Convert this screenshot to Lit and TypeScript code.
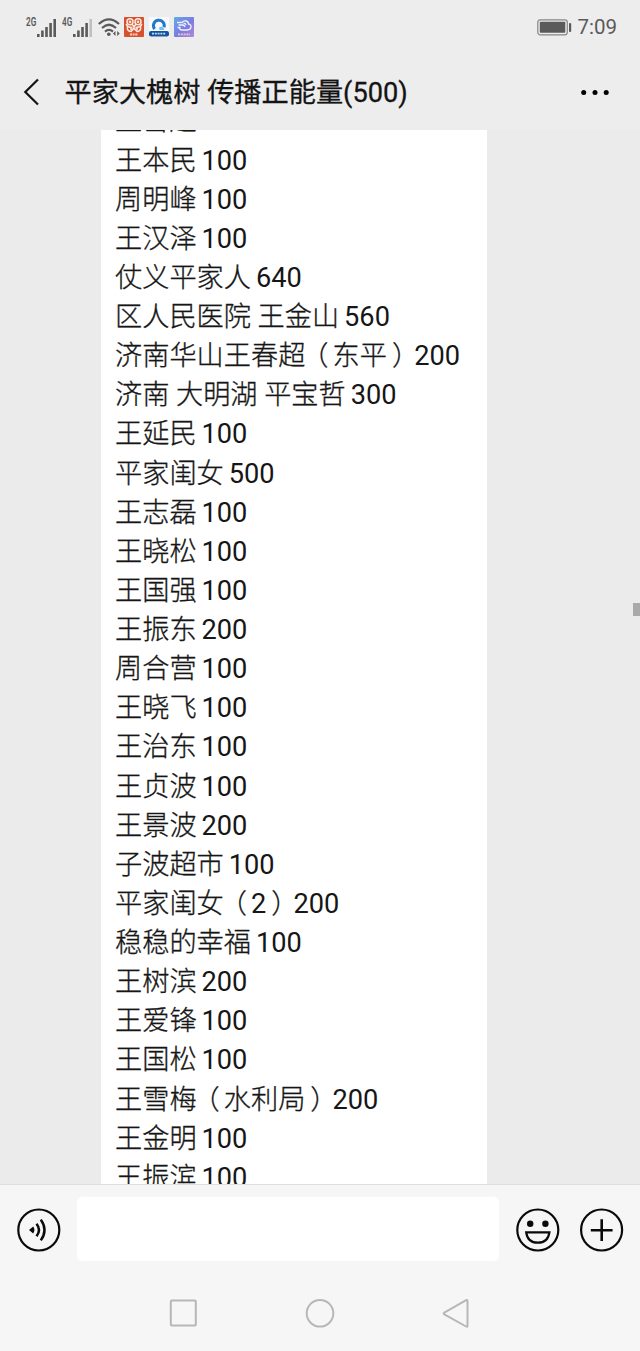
import { LitElement, html, css, svg } from 'lit';
import { customElement, property } from 'lit/decorators.js';

const DONATIONS: string[] = [
  '王雪超 100', '王本民 100', '周明峰 100', '王汉泽 100', '仗义平家人 640',
  '区人民医院 王金山 560', '济南华山王春超（东平）200', '济南 大明湖 平宝哲 300',
  '王延民 100', '平家闺女 500', '王志磊 100', '王晓松 100', '王国强 100',
  '王振东 200', '周合营 100', '王晓飞 100', '王治东 100', '王贞波 100',
  '王景波 200', '子波超市 100', '平家闺女（2）200', '稳稳的幸福 100',
  '王树滨 200', '王爱锋 100', '王国松 100', '王雪梅（水利局）200',
  '王金明 100', '王振滨 100',
];

const signal = (faded: boolean) => svg`
  <rect x="0" y="15" width="2.6" height="3"/>
  <rect x="4.1" y="11.5" width="2.6" height="6.5"/>
  <rect x="8.2" y="8" width="2.6" height="10"/>
  <rect x="12.3" y="4" width="2.6" height="14"/>
  <rect x="16.4" y="0" width="2.6" height="18" opacity=${faded ? 0.3 : 1}/>`;

@customElement('status-bar')
class StatusBar extends LitElement {
  static styles = css`
    :host { display: flex; height: 54px; box-sizing: border-box; padding: 0 23px 0 26px;
      align-items: center; justify-content: space-between; color: #5a5a5a;
      font-family: Roboto, "Noto Sans CJK SC", sans-serif; }
    .group { display: flex; align-items: center; }
    .net { font-size: 12px; line-height: 11px; font-weight: 600; width: 11px;
      align-self: flex-start; transform: scaleX(0.68); transform-origin: left; }
    .cell { display: flex; height: 20px; align-items: flex-end; margin-right: 6px; }
    .cell svg { fill: currentColor; }
    .wifi { margin-right: 4px; }
    .app { margin-right: 5px; }
    .clock { font-size: 20.5px; line-height: 24px; margin-left: 5px; }
    svg { display: block; }
  `;
  render() {
    return html`
      <div class="group">
        <div class="cell"><span class="net">2G</span><svg width="19" height="18" viewBox="0 0 19 18">${signal(false)}</svg></div>
        <div class="cell"><span class="net">4G</span><svg width="19" height="18" viewBox="0 0 19 18">${signal(true)}</svg></div>
        <svg class="wifi" width="22" height="20" viewBox="0 0 22 20" fill="none" stroke="#5a5a5a" stroke-width="2.2">
          <path d="M.8 7Q11-2.2 21 7M4 11Q11 4.500 18 11M7 14.600Q11 11 15 14.600"/>
          <circle cx="10.800" cy="17.200" r="1.800" fill="#5a5a5a" stroke="none"/>
          <path d="M17.500 14v5l-2.500-2.500zM19.200 19v-5l2.500 2.500z" fill="#5a5a5a" stroke="none"/>
        </svg>
        <svg class="app" width="20" height="20" viewBox="0 0 20 20">
          <rect width="20" height="20" rx="1" fill="#d7502f"/>
          <g fill="none" stroke="#fbe9df" stroke-width="1.5">
            <circle cx="6" cy="4.800" r="3"/><circle cx="14" cy="4.800" r="3"/>
            <circle cx="6" cy="4.800" r=".6"/><circle cx="14" cy="4.800" r=".6"/>
            <path d="M2.200 7Q3 10.500 8.500 10.500M17.800 7Q17 10.500 11.500 10.500M3.500 9.500Q2.500 14 7 14.500Q8.500 13 10 11Q11.500 13 13 14.500Q17.500 14 16.500 9.500M8 7l2 3 2-3M6 12h2M12 12h2"/>
          </g>
          <path d="M6 17.500h8" stroke="#f7d3c2" stroke-width="2" stroke-dasharray="2 .6"/>
        </svg>
        <svg class="app" width="20" height="20" viewBox="0 0 20 20">
          <rect width="20" height="20" rx="1" fill="#f7fafd"/>
          <path d="M5.700 12A5.400 5.400 0 1 1 15 10.200" fill="none" stroke="#2478c8" stroke-width="3"/>
          <path d="M10 10.500q4-2.500 5.500 2.500h-5z" fill="#75baf0"/>
          <rect y="14" width="20" height="5.500" rx="2" fill="#14539b"/>
          <path d="M3 16.700h14" stroke="#b9d8f5" stroke-width="1.700" stroke-dasharray="2 .8"/>
        </svg>
        <svg width="20" height="20" viewBox="0 0 20 20">
          <defs><linearGradient id="sky" x1="0" y1="0" x2="1" y2="1">
            <stop offset="0" stop-color="#62aae8"/><stop offset=".55" stop-color="#7c7be0"/><stop offset="1" stop-color="#b08bd8"/>
          </linearGradient></defs>
          <rect width="20" height="20" rx="1" fill="url(#sky)"/>
          <path d="M3 5.500h5q1.500-2 4-1.500 2.500.5 2.500 3 3 .5 2.500 3.200-.5 2.800-3.500 2.800H8q-2.500 0-2.500-2.500M4.500 8h4q2 0 2.500 2M9.500 6.500q2-.5 2.500 1.500M3.500 10.500h3" fill="none" stroke="#edf2ff" stroke-width="1.300"/>
          <path d="M4 17.300h12" stroke="#f1c5c8" stroke-width="1.800" stroke-dasharray="2 .8"/>
        </svg>
      </div>
      <div class="group">
        <svg width="35" height="17" viewBox="0 0 35 17">
          <rect x=".8" y=".8" width="29.500" height="15" rx="2.500" fill="none" stroke="#858585" stroke-width="1.200"/>
          <rect x="2.800" y="2.800" width="25.500" height="11" rx=".8" fill="#5a5a5a"/>
          <rect x="32" y="4" width="2.200" height="9" rx="1" fill="#5a5a5a"/>
        </svg>
        <span class="clock">7:09</span>
      </div>`;
  }
}

@customElement('chat-header')
class ChatHeader extends LitElement {
  @property() heading = '';
  static styles = css`
    :host { display: flex; height: 76px; box-sizing: border-box; align-items: center; padding: 0 31px 0 23px;
      color: #141414; font-family: Roboto, "Noto Sans CJK SC", sans-serif; }
    .title { flex: 1; margin: 2px 0 0 24.5px; font-size: 27.2px; line-height: 40px; font-weight: 400;
      -webkit-text-stroke: 0.3px #141414; white-space: nowrap; }
    svg { display: block; }
  `;
  render() {
    return html`
      <svg width="17" height="28" viewBox="0 0 17 28" fill="none" stroke="#141414" stroke-width="2.200">
        <path d="M15 1.500 2.300 14 15 26.500"/>
      </svg>
      <h1 class="title">${this.heading}</h1>
      <svg width="28" height="6" viewBox="0 0 28 6" fill="#000">
        <circle cx="2.700" cy="3.500" r="2.500"/><circle cx="14" cy="3.500" r="2.500"/><circle cx="25.200" cy="3.500" r="2.500"/>
      </svg>`;
  }
}

@customElement('message-view')
class MessageView extends LitElement {
  @property({ attribute: false }) lines: string[] = [];
  static styles = css`
    :host { display: flex; position: relative; height: 1054px; overflow: hidden; padding-left: 101px;
      box-sizing: border-box; background: #ebebeb; }
    .card { width: 386px; height: 1054px; overflow: hidden; background: #fff; }
    .list { list-style: none; margin: -27.6px 0 0; padding: 0 0 0 14px; color: #161616;
      font: 300 27.2px/39.12px Roboto, "Noto Sans CJK SC", sans-serif; white-space: nowrap;
      -webkit-text-stroke: 0.3px #161616; }
    .amount { font-weight: 400; word-spacing: -1.8px; -webkit-text-stroke: 0; }
    .open, .close { position: relative; }
    .open { left: -4px; }
    .close { left: 5px; }
    .thumb { position: absolute; right: 0; top: 473px; width: 7px; height: 13px; background: #a9a9a9; }
  `;
  private part(text: string) {
    if (text === '（') return html`<span class="open">${text}</span>`;
    if (text === '）') return html`<span class="close">${text}</span>`;
    return /^ ?\d+$/.test(text) ? html`<span class="amount">${text}</span>` : text;
  }
  render() {
    return html`
      <div class="card"><ul class="list">${this.lines.map(
        (line) => html`<li>${line.split(/( ?\d+|[（）])/).filter(Boolean).map((t) => this.part(t))}</li>`
      )}</ul></div>
      <div class="thumb"></div>`;
  }
}

@customElement('input-bar')
class InputBar extends LitElement {
  static styles = css`
    :host { display: flex; height: 92px; box-sizing: border-box; border-top: 1px solid #dedede;
      padding: 12px 16px 15px; align-items: center; background: #f6f6f6; }
    .field { flex: 1; height: 64px; margin: 0 16px; border-radius: 5px; background: #fff; }
    .icon { margin-top: 1px; }
    .plus { margin-left: 18px; }
    svg { display: block; fill: none; stroke: #0a0a0a; stroke-width: 2.2; }
    .solid { fill: #0a0a0a; stroke: none; }
  `;
  render() {
    return html`
      <svg class="icon" width="45" height="46" viewBox="0 0 45 46">
        <circle cx="22.800" cy="23" r="20.500"/>
        <path class="solid" d="M13 23 17.200 19.600Q19.700 23 17.200 26.400Z"/>
        <path d="M20.500 16.800Q25.500 23 20.500 29.200M24.800 12.600Q32.200 23 24.800 33.400" stroke-width="2.500"/>
      </svg>
      <div class="field"></div>
      <svg class="icon" width="46" height="46" viewBox="0 0 46 46">
        <circle cx="22.800" cy="23" r="20.500"/>
        <circle class="solid" cx="15.200" cy="16.800" r="3.200"/><circle class="solid" cx="30.400" cy="16.800" r="3.200"/>
        <path d="M11.200 25.300H34.400Q33 35.700 22.800 35.700T11.200 25.300Z"/>
      </svg>
      <svg class="icon plus" width="45" height="46" viewBox="0 0 45 46">
        <circle cx="22.600" cy="23" r="20.500"/>
        <path d="M11.800 23.200H33.600M22.700 12.300V34.100" stroke-width="2.600"/>
      </svg>`;
  }
}

@customElement('nav-bar')
class NavBar extends LitElement {
  static styles = css`
    :host { display: flex; box-sizing: border-box; justify-content: center; align-items: center;
      gap: 107px; background: #f6f6f6; }
    svg { display: block; fill: none; stroke: #b7b7b7; stroke-width: 2; }
  `;
  render() {
    return html`
      <svg width="30" height="30" viewBox="0 0 30 30"><rect x="2.800" y="1.600" width="25" height="24.800" rx="1"/></svg>
      <svg width="30" height="30" viewBox="0 0 30 30"><circle cx="15" cy="14.300" r="13.300"/></svg>
      <svg width="30" height="30" viewBox="0 0 30 30"><path stroke-linejoin="round" d="M24.200 1.200Q25.500.5 25.500 2V26.500Q25.500 28.300 24.200 27.500L2.300 15.300Q1 14.500 2.300 13.700Z"/></svg>`;
  }
}

@customElement('app-root')
class AppRoot extends LitElement {
  static styles = css`
    :host { display: flex; flex-direction: column; width: 640px; height: 1351px; overflow: hidden; background: #ededed; }
    .nav { flex: 1; }
  `;
  render() {
    return html`
      <status-bar></status-bar>
      <chat-header heading="平家大槐树 传播正能量(500)"></chat-header>
      <message-view .lines=${DONATIONS}></message-view>
      <input-bar></input-bar>
      <nav-bar class="nav"></nav-bar>`;
  }
}
